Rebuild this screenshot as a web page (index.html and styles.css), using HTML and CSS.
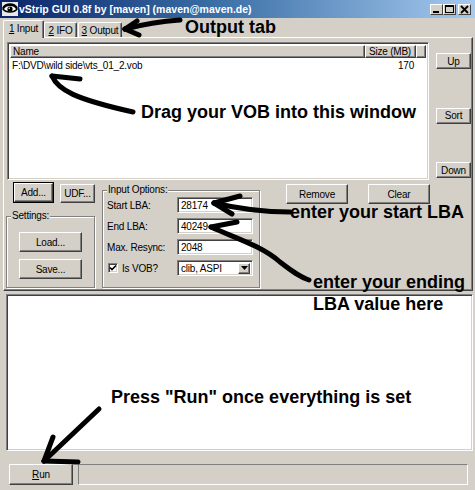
FILE: index.html
```html
<!DOCTYPE html>
<html>
<head>
<meta charset="utf-8">
<title>vStrip GUI</title>
<link rel="stylesheet" href="styles.css">
</head>
<body>
<div class="win">
  <div class="titlebar">
    <svg class="appicon" width="16" height="14" viewBox="0 0 16 14">
      <rect x="0" y="0" width="16" height="14" fill="#e8e8e8"/>
      <path d="M1 7 C4 2 12 2 15 7 C12 11 4 11 1 7 Z" fill="#fff" stroke="#000" stroke-width="1.5"/>
      <path d="M1 6 C4 1 12 1 15 6" fill="none" stroke="#000" stroke-width="2.2"/>
      <circle cx="8" cy="7" r="2.6" fill="#000"/>
      <circle cx="7.2" cy="6.2" r="0.8" fill="#fff"/>
    </svg>
    <span class="title">vStrip GUI 0.8f by [maven] (maven@maven.de)</span>
    <div class="caps">
      <div class="cap"><svg width="11" height="9" viewBox="0 0 11 9"><rect x="2" y="6" width="6" height="2" fill="#000"/></svg></div>
      <div class="cap"><svg width="11" height="9" viewBox="0 0 11 9"><rect x="1.5" y="0.5" width="8" height="7" fill="none" stroke="#000"/><rect x="1" y="0" width="9" height="2" fill="#000"/></svg></div>
      <div class="cap close"><svg width="11" height="9" viewBox="0 0 11 9"><path d="M2 1 L9 8 M9 1 L2 8" stroke="#000" stroke-width="1.8"/></svg></div>
    </div>
  </div>

  <div class="tabs">
    <div class="tab active"><span><u>1</u> Input</span></div>
    <div class="tab"><span><u>2</u> IFO</span></div>
    <div class="tab"><span><u>3</u> Output</span></div>
  </div>

  <div class="panel">
    <div class="toprow">
      <div class="list sunken">
        <div class="lhead">
          <div class="hcell name">Name</div>
          <div class="hcell size">Size (MB)</div>
          <div class="hcell rest"></div>
        </div>
        <div class="lrow">
          <span class="fname">F:\DVD\wild side\vts_01_2.vob</span>
          <span class="fsize">170</span>
        </div>
      </div>
      <div class="sidebtns">
        <div class="btn side">Up</div>
        <div class="btn side">Sort</div>
        <div class="btn side">Down</div>
      </div>
    </div>

    <div class="botrow">
      <div class="leftcol">
        <div class="addrow">
          <div class="btn add default">Add...</div>
          <div class="btn udf">UDF...</div>
        </div>
        <fieldset class="group settings">
          <legend>Settings:</legend>
          <div class="btn wide load">Load...</div>
          <div class="btn wide save">Save...</div>
        </fieldset>
      </div>

      <fieldset class="group inopts">
        <legend>Input Options:</legend>
        <div class="optgrid">
          <span class="olabel">Start LBA:</span>
          <div class="field sunken">28174</div>
          <span class="olabel">End LBA:</span>
          <div class="field sunken">40249</div>
          <span class="olabel">Max. Resync:</span>
          <div class="field sunken">2048</div>
          <span class="olabel check">
            <span class="cbox sunken"><svg width="8" height="8" viewBox="0 0 8 8"><path d="M1 3.5 L3 5.5 L7 1.5" fill="none" stroke="#000" stroke-width="1.6"/></svg></span>
            <span>Is VOB?</span>
          </span>
          <div class="field sunken select">
            <span class="seltext">clib, ASPI</span>
            <span class="dd"><svg width="7" height="4" viewBox="0 0 7 4"><path d="M0 0 H7 L3.5 4 Z" fill="#000"/></svg></span>
          </div>
        </div>
      </fieldset>

      <div class="rightbtns">
        <div class="btn mid">Remove</div>
        <div class="btn mid clear">Clear</div>
      </div>
    </div>
  </div>

  <div class="output sunken"></div>

  <div class="statusrow">
    <div class="btn run"><span><u>R</u>un</span></div>
    <div class="status"></div>
  </div>

  <svg class="arrows" width="475" height="490" viewBox="0 0 475 490">
    <g fill="none" stroke="#000" stroke-width="5" stroke-linecap="round" stroke-linejoin="round">
      <path d="M180 20 Q152 22 125 29"/>
      <path d="M125 29 L137 21"/>
      <path d="M125 29 L139 35"/>

      <path d="M52 76 C58 90 75 99 133 112"/>
      <path d="M52 76 L80 79"/>

      <path d="M214 203 C235 208 260 212 290 212"/>
      <path d="M214 203 L240 196"/>
      <path d="M214 203 L232 214"/>

      <path d="M211 227 C235 238 262 246 280 262 C293 272 300 277 309 280"/>
      <path d="M211 227 L237 222"/>

      <path d="M99 409 L44 461"/>
      <path d="M44 461 L53 437"/>
      <path d="M44 461 L78 462"/>
    </g>
  </svg>

  <div class="note n-tab">Output tab</div>
  <div class="note n-drag">Drag your VOB into this window</div>
  <div class="note n-start">enter your start LBA</div>
  <div class="note n-end">enter your ending<br>LBA value here</div>
  <div class="note n-run">Press "Run" once everything is set</div>
</div>
</body>
</html>
```

FILE: styles.css
```css
* { box-sizing: border-box; }

html, body {
  margin: 0;
  padding: 0;
}

body {
  width: 475px;
  height: 490px;
  overflow: hidden;
  background: #d4d0c8;
  font-family: "Liberation Sans", Arial, sans-serif;
  font-size: 10px;
  letter-spacing: -0.2px;
  color: #000;
}

.win {
  position: relative;
  width: 475px;
  height: 490px;
  display: flex;
  flex-direction: column;
}

/* title bar */
.titlebar {
  height: 18px;
  display: flex;
  align-items: center;
  padding: 0 4px 0 2px;
  background: linear-gradient(to right, #0a246a 0%, #3a6ea5 45%, #a6caf0 100%);
}
.appicon { flex: none; margin-right: 1px; }
.title {
  color: #fff;
  font-weight: bold;
  font-size: 10.5px;
  letter-spacing: 0;
  white-space: nowrap;
}
.caps {
  margin-left: auto;
  display: flex;
  align-items: center;
}
.cap {
  width: 13px;
  height: 11px;
  background: #d4d0c8;
  border: 1px solid;
  border-color: #fff #404040 #404040 #fff;
  display: flex;
  align-items: center;
  justify-content: center;
}
.cap svg { display: block; }
.cap.close { margin-left: 2px; }

/* tabs */
.tabs {
  height: 19px;
  display: flex;
  align-items: flex-end;
  padding-left: 3px;
  position: relative;
  z-index: 2;
}
.tab {
  height: 15px;
  padding: 0 3px;
  background: #d4d0c8;
  border-top: 1px solid #fff;
  border-left: 1px solid #fff;
  border-right: 1px solid #404040;
  box-shadow: inset -1px 0 #808080;
  border-radius: 2px 2px 0 0;
  display: flex;
  align-items: center;
  justify-content: center;
  white-space: nowrap;
}
.tab:nth-child(2) { width: 33px; }
.tab:nth-child(3) { width: 44px; margin-left: 1px; }
.tab.active {
  width: 41px;
  height: 18px;
  margin-bottom: -1px;
  padding-bottom: 2px;
}

/* panel */
.panel {
  margin-left: 3px;
  width: 470px;
  height: 254px;
  border: 1px solid;
  border-color: #fff #404040 #404040 #fff;
  box-shadow: inset -1px -1px #808080;
  padding-top: 4px;
  position: relative;
  z-index: 1;
}

.sunken {
  background: #fff;
  border: 1px solid;
  border-color: #808080 #fff #fff #808080;
  box-shadow: inset 1px 1px #404040, inset -1px -1px #d4d0c8;
}

.btn {
  background: #d4d0c8;
  border: 1px solid;
  border-color: #fff #404040 #404040 #fff;
  box-shadow: inset -1px -1px #808080;
  display: flex;
  align-items: center;
  justify-content: center;
  white-space: nowrap;
}
.btn.default {
  outline: 1px solid #000;
}

.toprow {
  display: flex;
}
.list {
  margin-left: 3px;
  width: 422px;
  height: 138px;
  padding: 2px;
}
.lhead {
  display: flex;
  height: 13px;
}
.hcell {
  background: #d4d0c8;
  border: 1px solid;
  border-color: #fff #404040 #404040 #fff;
  box-shadow: inset -1px -1px #808080;
  display: flex;
  align-items: center;
}
.hcell.name { width: 355px; padding-left: 2px; }
.hcell.size { width: 51px; justify-content: flex-end; padding-right: 4px; }
.hcell.rest { flex: 1; }
.lrow {
  display: flex;
  height: 13px;
  margin-top: 1px;
  align-items: center;
  padding-left: 2px;
}
.fname { width: 356px; }
.fsize { width: 46px; text-align: right; }

.sidebtns {
  margin-left: 7px;
  margin-top: 11px;
  height: 125px;
  display: flex;
  flex-direction: column;
  justify-content: space-between;
}
.btn.side { width: 35px; height: 16px; }

.botrow {
  display: flex;
  align-items: flex-start;
  margin-top: 3px;
}
.leftcol {
  margin-left: 2px;
  width: 89px;
}
.addrow {
  display: flex;
  align-items: flex-start;
}
.btn.add { margin-left: 8px; width: 40px; height: 19px; }
.btn.udf { margin-left: 7px; width: 36px; height: 19px; margin-top: 1px; }

.group {
  margin: 0;
  padding: 0 4px;
  border: 1px solid #808080;
  box-shadow: inset 1px 1px #fff, 1px 1px #fff;
  min-width: 0;
}
.group legend {
  padding: 0 1px;
  height: 12px;
  line-height: 12px;
  background: #d4d0c8;
}
.settings {
  margin-top: 7px;
  height: 78px;
  width: 89px;
}
.btn.wide { width: 63px; height: 20px; margin-left: 8px; }
.btn.load { margin-top: 10px; }
.btn.save { margin-top: 7px; }

.inopts {
  margin-left: 7px;
  margin-top: 1px;
  width: 158px;
  height: 104px;
}
.optgrid {
  display: grid;
  grid-template-columns: 70px 76px;
  grid-auto-rows: 16px;
  row-gap: 5px;
  padding-top: 1px;
}
.olabel {
  display: flex;
  align-items: center;
  white-space: nowrap;
}
.olabel.check { padding-left: 1px; }
.cbox {
  width: 10px;
  height: 10px;
  display: inline-flex;
  align-items: center;
  justify-content: center;
  margin-right: 4px;
}
.cbox svg { display: block; }
.field {
  padding: 0 2px 0 3px;
  display: flex;
  align-items: center;
}
.field.select { padding-right: 2px; }
.seltext { flex: 1; }
.dd {
  width: 12px;
  height: 11px;
  background: #d4d0c8;
  border: 1px solid;
  border-color: #fff #404040 #404040 #fff;
  box-shadow: inset -1px -1px #808080;
  display: flex;
  align-items: center;
  justify-content: center;
}
.dd svg { display: block; }

.rightbtns {
  display: flex;
  margin-left: 26px;
  margin-top: 1px;
}
.btn.mid { width: 62px; height: 20px; }
.btn.clear { margin-left: 20px; }

/* output */
.output {
  margin-top: 3px;
  margin-left: 6px;
  width: 467px;
  height: 157px;
}

.statusrow {
  display: flex;
  margin-top: 13px;
}
.btn.run { margin-left: 9px; width: 64px; height: 21px; }
.status {
  margin-left: 5px;
  width: 390px;
  height: 21px;
  border: 1px solid;
  border-color: #808080 #fff #fff #808080;
}

/* annotations */
.arrows {
  position: absolute;
  left: 0;
  top: 0;
  z-index: 5;
  pointer-events: none;
}
.note {
  position: absolute;
  z-index: 6;
  font-family: "Liberation Sans", Arial, sans-serif;
  font-weight: bold;
  font-size: 18px;
  line-height: 18px;
  letter-spacing: 0;
  white-space: nowrap;
  color: #000;
}
.n-tab { left: 185px; top: 18px; }
.n-drag { left: 141px; top: 103px; }
.n-start { left: 290px; top: 203px; }
.n-end { left: 313px; top: 271px; line-height: 22px; }
.n-run { left: 111px; top: 388px; }
```
